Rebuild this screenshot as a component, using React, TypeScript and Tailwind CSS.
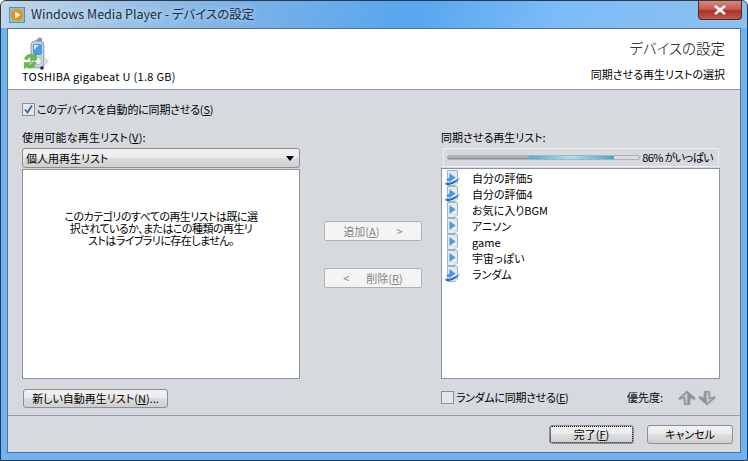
import React from 'react';

const font = '[font-family:"Noto_Sans_CJK_JP","Noto_Sans",sans-serif] [font-feature-settings:"palt"]';

const WmpLogo = () => (
  <svg width="16" height="16" viewBox="0 0 16 16" className="shrink-0">
    <rect x="0.5" y="0.5" width="15" height="15" fill="#8fc3b8" stroke="#3f95d6" />
    <circle cx="8" cy="8" r="6" fill="#f28a12" />
    <path d="M6 4.5 L11.5 8 L6 11.5 Z" fill="#fff" />
  </svg>
);

const DeviceIcon = () => (
  <svg width="28" height="34" viewBox="0 0 28 34">
    <path d="M12 5 L17 0.5 L20 1 L20 6 Z" fill="#8d97a1" />
    <rect x="9" y="4" width="13" height="27" rx="4" fill="#c9d0d7" stroke="#78828c" strokeWidth="0.7" />
    <rect x="11" y="7" width="9" height="11" rx="2" fill="#4a9be4" />
    <path d="M12 8 H17 L12 13 Z" fill="#cfe6fa" />
    <circle cx="16" cy="24" r="3.5" fill="#eef1f4" stroke="#98a2ac" strokeWidth="0.6" />
    <path d="M22 20 L27 24 L22 30 Z" fill="#d6d9dd" />
    <circle cx="20" cy="31" r="1.8" fill="#26292c" />
    <path d="M2.5 22 C3.5 17.5 9 16 12 18.5 L14 16.5 L14.5 23 L8 23 L10 21 C8 20 6 20.5 5.5 23 Z" fill="#63c13f" stroke="#3c8f2a" strokeWidth="0.4" />
    <path d="M14 25.5 C13 31 7.5 32.5 4.5 30 L2.5 32 L2 25.5 L8.5 25.5 L6.5 27.5 C8.5 28.5 10.5 28 11 25.5 Z" fill="#63c13f" stroke="#3c8f2a" strokeWidth="0.4" />
  </svg>
);

const PlaylistIcon = ({ auto }: { auto?: boolean }) => (
  <svg width="15" height="16" viewBox="0 0 15 16" className="shrink-0">
    <path d="M2.5 0.5 H12.5 V12.5 L10 15.5 H2.5 Z" fill="#e6eaee" stroke="#a9b0b7" />
    <path d="M10 15.5 L10 12.5 L12.5 12.5 Z" fill="#fff" stroke="#a9b0b7" strokeWidth="0.5" />
    <path d="M4.5 3 L10.5 7.5 L4.5 12 Z" fill="#3f9cf0" />
    {auto && (
      <>
        <path d="M1 10 L5 7 L5 12 Z" fill="#3f9cf0" />
        <path d="M0 12.5 C4 14 10 11 15 7.5 C12 12.5 6 15.8 1 15 Z" fill="#2272c6" />
      </>
    )}
  </svg>
);

const ArrowIcon = ({ down }: { down?: boolean }) => (
  <svg width="18" height="16" viewBox="0 0 18 16" className={down ? 'rotate-180' : ''}>
    <path d="M9 0.5 L17.5 8 L17 10 L12.5 8.5 L12 15 L6 15 L5.5 8.5 L1 10 L0.5 8 Z" fill="#8f9395" stroke="#b9bcbe" strokeWidth="0.6" strokeLinejoin="round" />
    <path d="M9 2.5 L3.5 7.5 L7 6.5 L7.5 13.5 L9.5 13.5 L9.5 5 Z" fill="#c4c6c8" />
  </svg>
);

const playlists = [
  { name: '自分の評価5', auto: true },
  { name: '自分の評価4', auto: true },
  { name: 'お気に入りBGM' },
  { name: 'アニソン' },
  { name: 'game' },
  { name: '宇宙っぽい' },
  { name: 'ランダム', auto: true },
];

const btn =
  'flex items-center justify-center rounded-[3px] border border-[#8e8f8f] bg-[linear-gradient(#f2f2f2_0%,#ebebeb_48%,#dddddd_50%,#cfcfcf_100%)] text-[11px] text-black';
const btnOff =
  'flex w-[98px] h-[20px] items-center justify-center rounded-[2px] border border-[#adb2b5] bg-[#f4f4f4] text-[11px] text-[#838383]';

export default function App() {
  return (
    <div className={`relative flex h-[461px] w-[748px] flex-col overflow-hidden rounded-t-[6px] border border-[#2b3a47] bg-[#6db3f4] leading-none text-black ${font}`}>
      <div className="flex h-[27px] shrink-0 items-center bg-[linear-gradient(100deg,#c3d5e6_0%,#7fb3e6_30%,#56a6f0_55%,#7dbcf8_75%,#8dc0ee_100%)] pl-[8px]">
        <WmpLogo />
        <span className="ml-[6px] text-[12.5px] text-[#1c2c3c] [text-shadow:0_0_6px_#d8ecff]">Windows Media Player - デバイスの設定</span>
      </div>
      {/* close button sits over the frame */}
      <div className="absolute right-[5px] top-0 flex h-[19px] w-[44px] items-center justify-center rounded-b-[4px] border border-t-0 border-[#4a2a2a] bg-[linear-gradient(#d98a80_0%,#c9584c_45%,#a83328_55%,#c2594c_100%)]">
        <svg width="14" height="10" viewBox="0 0 14 10">
          <path d="M2 1 L12 9 M12 1 L2 9" stroke="#fff" strokeWidth="2.6" />
        </svg>
      </div>

      <div className="mx-[6px] mb-[7px] flex flex-1 flex-col border border-[#5b6f80] bg-[#d6dadf]">
        <div className="flex h-[61px] shrink-0 justify-between border-b border-[#8b97a1] bg-white pl-[14px] pr-[15px]">
          <div className="flex flex-col">
            <div className="mt-[8px] h-[33px]">
              <DeviceIcon />
            </div>
            <span className="mt-[1px] text-[11px] tracking-[0.3px]">TOSHIBA gigabeat U (1.8 GB)</span>
          </div>
          <div className="flex flex-col items-end">
            <span className="mt-[12px] text-[14.5px] font-light">デバイスの設定</span>
            <span className="mt-[13px] text-[11px]">同期させる再生リストの選択</span>
          </div>
        </div>

        <div className="flex flex-1 flex-col pl-[14px] pr-[20px] pt-[11px]">
          <label className="flex h-[16px] items-center text-[11px] tracking-[-0.2px]">
            <span className="flex h-[13px] w-[13px] items-center justify-center border border-[#8e8f8f] bg-[#e4e8ec]">
              <svg width="11" height="11" viewBox="0 0 11 11">
                <path d="M2 5.5 L4.5 8.5 L9 1.5" fill="none" stroke="#3d5fa8" strokeWidth="1.8" />
              </svg>
            </span>
            <span className="ml-[2px]">このデバイスを自動的に同期させる(<u>S</u>)</span>
          </label>

          <div className="mt-[13px] grid flex-1 grid-cols-[278px_1fr_279px]">
            <div className="flex flex-col">
              <span className="h-[18px] text-[11px] leading-[14px] tracking-[0.2px]">使用可能な再生リスト(<u>V</u>):</span>
              <div className="flex h-[20px] items-center justify-between rounded-[3px] border border-[#8e8f8f] bg-[linear-gradient(#f2f2f2_0%,#ebebeb_48%,#dddddd_50%,#cfcfcf_100%)] pl-[3px] pr-[5px] text-[11px]">
                <span>個人用再生リスト</span>
                <span className="h-0 w-0 border-x-[4px] border-t-[5px] border-x-transparent border-t-black" />
              </div>
              <div className="mt-[1px] flex h-[210px] items-start justify-center border border-[#8b9299] bg-white pt-[40px] text-center text-[11px] leading-[12px] tracking-[-0.55px]">
                <p className="whitespace-nowrap">
                  このカテゴリのすべての再生リストは既に選
                  <br />
                  択されているか、またはこの種類の再生リ
                  <br />
                  ストはライブラリに存在しません。
                </p>
              </div>
              <div className={`${btn} ml-[1px] mt-[10px] h-[19px] w-[145px]`}>新しい自動再生リスト(<u>N</u>)...</div>
            </div>

            <div className="flex flex-col items-center pl-[5px] pt-[91px]">
              <div className={btnOff}>
                <span>追加(<u>A</u>)</span>
                <span className="ml-[17px]">&gt;</span>
              </div>
              <div className={`${btnOff} mt-[27px]`}>
                <span className="mr-[17px]">&lt;</span>
                <span>削除(<u>R</u>)</span>
              </div>
            </div>

            <div className="flex flex-col">
              <span className="h-[18px] text-[11px] leading-[14px]">同期させる再生リスト:</span>
              <div className="ml-[2px] mr-[1px] flex h-[19px] items-center justify-between rounded-[1px] border border-[#eef0f2] pl-[3px] pr-[5px]">
                <div className="flex h-[5px] w-[193px] shrink-0 overflow-hidden rounded-[2px] border border-[#adb2b6] bg-[#d8dce0]">
                  <div className="w-[81px] bg-[linear-gradient(#bdbdbd,#8f8f8f)]" />
                  <div className="w-[85px] bg-[linear-gradient(90deg,#4aaed8,#a6e2f2_50%,#3fa6d6)]" />
                </div>
                <span className="whitespace-nowrap text-[11px] tracking-[-0.6px]">86% がいっぱい</span>
              </div>
              <div className="mt-[1px] flex h-[211px] flex-col border border-[#8b9299] bg-white pl-[3px] pt-[1px] text-[11px]">
                {playlists.map((p) => (
                  <div key={p.name} className="flex h-[16px] items-center">
                    <PlaylistIcon auto={p.auto} />
                    <span className="ml-[12px]">{p.name}</span>
                  </div>
                ))}
              </div>
              <div className="mt-[10px] flex h-[17px] items-center justify-between pr-[4px] text-[11px]">
                <label className="flex items-center tracking-[-0.3px]">
                  <span className="h-[13px] w-[13px] border border-[#8e8f8f] bg-[#e4e8ec]" />
                  <span className="ml-[2px]">ランダムに同期させる(<u>E</u>)</span>
                </label>
                <div className="flex items-center">
                  <span className="mr-[15px]">優先度:</span>
                  <ArrowIcon />
                  <span className="ml-[2px]"><ArrowIcon down /></span>
                </div>
              </div>
            </div>
          </div>
        </div>

        <div className="flex h-[37px] shrink-0 items-start justify-end border-t border-[#98a1a9] pr-[7px] pt-[9px]">
          <div className={`${btn} h-[19px] w-[85px] border-[#3c9bd0] outline-1 -outline-offset-2 outline-dotted outline-black`}>完了(<u>F</u>)</div>
          <div className={`${btn} ml-[13px] h-[19px] w-[86px]`}>キャンセル</div>
        </div>
      </div>
    </div>
  );
}
